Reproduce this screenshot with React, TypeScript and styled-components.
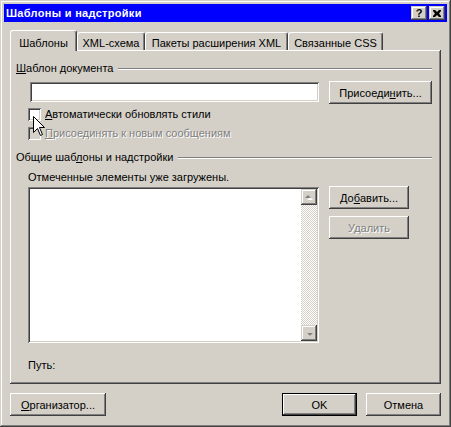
import React from "react";
import styled, { createGlobalStyle, css } from "styled-components";

const FACE = "#D4D0C8";
const SHADOW = "#808080";
const DARK = "#404040";

const GlobalStyle = createGlobalStyle`
  html, body { margin: 0; padding: 0; background: ${FACE}; }
  body {
    font-family: "Liberation Sans", Arial, sans-serif;
    font-size: 11px;
    color: #000;
  }
  * { box-sizing: border-box; }
`;

const raised = css`
  box-shadow: inset -1px -1px ${DARK}, inset 1px 1px #fff, inset -2px -2px ${SHADOW}, inset 2px 2px ${FACE};
`;

const frame = css`
  box-shadow: inset -1px -1px ${DARK}, inset 1px 1px ${FACE}, inset -2px -2px ${SHADOW}, inset 2px 2px #fff;
`;

const sunken = css`
  box-shadow: inset 1px 1px ${SHADOW}, inset -1px -1px #fff, inset 2px 2px ${DARK}, inset -2px -2px ${FACE};
`;

const Window = styled.div`
  position: relative;
  width: 451px;
  height: 427px;
  padding: 4px;
  background: ${FACE};
  display: flex;
  flex-direction: column;
  ${frame}
`;

const TitleBar = styled.div`
  height: 18px;
  background: #0000ff;
  display: flex;
  align-items: center;
  padding: 0 2px;
`;

const Title = styled.div`
  flex: 1;
  color: #fff;
  font-weight: bold;
  font-size: 11px;
  line-height: 14px;
  letter-spacing: 0.3px;
`;

const CaptionButton = styled.div<{ $gap?: number }>`
  width: 16px;
  height: 14px;
  margin-left: ${(p) => p.$gap ?? 0}px;
  background: ${FACE};
  display: flex;
  align-items: center;
  justify-content: center;
  font-weight: bold;
  font-size: 11px;
  line-height: 11px;
  ${frame}
`;

const Body = styled.div`
  flex: 1;
  display: flex;
  flex-direction: column;
  padding: 8px 6px 0;
`;

const TabRow = styled.div`
  height: 20px;
  display: flex;
  align-items: flex-end;
  position: relative;
  z-index: 2;
`;

const Tab = styled.div<{ $w: number; $active?: boolean }>`
  width: ${(p) => p.$w}px;
  height: ${(p) => (p.$active ? 21 : 18)}px;
  margin-bottom: ${(p) => (p.$active ? -1 : 0)}px;
  padding-top: ${(p) => (p.$active ? 5 : 3)}px;
  line-height: 14px;
  text-align: center;
  background: ${FACE};
  border-top: 1px solid #fff;
  border-left: 1px solid #fff;
  border-right: 1px solid ${DARK};
  border-radius: 3px 3px 0 0;
  box-shadow: inset -1px 0 ${SHADOW};
  white-space: nowrap;
`;

const Panel = styled.div`
  position: relative;
  z-index: 1;
  height: 334px;
  display: flex;
  flex-direction: column;
  padding-top: 11px;
  box-shadow: inset -1px -1px ${DARK}, inset 1px 1px #fff, inset -2px -2px ${SHADOW};
`;

const GroupHeader = styled.div<{ $mt?: number }>`
  height: 14px;
  margin: ${(p) => p.$mt ?? 0}px 9px 0 6px;
  display: flex;
  align-items: center;
  line-height: 14px;
  white-space: nowrap;
`;

const GroupLine = styled.div`
  flex: 1;
  margin-left: 5px;
  margin-top: 2px;
  border-top: 1px solid ${SHADOW};
  border-bottom: 1px solid #fff;
`;

const Row = styled.div<{ $mt: number }>`
  display: flex;
  align-items: flex-start;
  margin: ${(p) => p.$mt}px 0 0 18px;
`;

const TextField = styled.div`
  width: 289px;
  height: 20px;
  margin: 1px 10px 0 2px;
  background: #fff;
  ${sunken}
`;

const Button = styled.div<{ $w: number; $disabled?: boolean; $default?: boolean }>`
  width: ${(p) => p.$w}px;
  height: 23px;
  display: flex;
  align-items: center;
  justify-content: center;
  line-height: 14px;
  background: ${FACE};
  white-space: nowrap;
  ${(p) =>
    p.$default
      ? css`
          box-shadow: inset 0 0 0 1px #000, inset -2px -2px ${DARK}, inset 2px 2px #fff, inset -3px -3px ${SHADOW};
        `
      : raised}
  ${(p) =>
    p.$disabled &&
    css`
      color: ${SHADOW};
      text-shadow: 1px 1px 0 #fff;
    `}
`;

const CheckRow = styled.div<{ $mt: number; $disabled?: boolean }>`
  height: 13px;
  display: flex;
  align-items: center;
  margin: ${(p) => p.$mt}px 0 0 18px;
  line-height: 13px;
  white-space: nowrap;
  ${(p) =>
    p.$disabled &&
    css`
      color: ${SHADOW};
      text-shadow: 1px 1px 0 #fff;
    `}
`;

const CheckBox = styled.div<{ $disabled?: boolean }>`
  width: 13px;
  height: 13px;
  margin-right: 4px;
  background: ${(p) => (p.$disabled ? FACE : "#fff")};
  ${sunken}
`;

const Caption = styled.div<{ $mt: number }>`
  margin: ${(p) => p.$mt}px 0 0 18px;
  line-height: 14px;
  height: 14px;
  white-space: nowrap;
`;

const ListBox = styled.div`
  width: 291px;
  height: 156px;
  margin: 1px 10px 0 0;
  padding: 2px;
  display: flex;
  justify-content: flex-end;
  background: #fff;
  ${sunken}
`;

const ScrollBar = styled.div`
  width: 16px;
  display: flex;
  flex-direction: column;
`;

const ScrollButton = styled.div`
  width: 16px;
  height: 16px;
  display: flex;
  align-items: center;
  justify-content: center;
  background: ${FACE};
  ${frame}
`;

const ScrollTrack = styled.div`
  flex: 1;
  background-image: conic-gradient(#fff 25%, ${FACE} 0 50%, #fff 0 75%, ${FACE} 0);
  background-size: 2px 2px;
`;

const ButtonColumn = styled.div`
  display: flex;
  flex-direction: column;
  gap: 7px;
`;

const Footer = styled.div`
  display: flex;
  align-items: center;
  margin-top: 9px;
`;

const Spacer = styled.div`
  flex: 1;
`;

const FooterGap = styled.div`
  width: 9px;
`;

const Cursor = styled.svg`
  position: absolute;
  left: 33px;
  top: 116px;
  z-index: 10;
`;

const Arrow: React.FC<{ down?: boolean }> = ({ down }) => (
  <svg width="8" height="5" viewBox="0 0 8 5" style={{ transform: down ? "rotate(180deg)" : undefined }}>
    <path d="M4 1 L7 4 L1 4 Z" fill="#fff" transform={down ? "translate(-1,-1)" : "translate(1,1)"} />
    <path d="M3 0 L6 3 L0 3 Z" fill={SHADOW} />
  </svg>
);

export default function App() {
  return (
    <>
      <GlobalStyle />
      <Window>
        <TitleBar>
          <Title>Шаблоны и надстройки</Title>
          <CaptionButton>?</CaptionButton>
          <CaptionButton $gap={2}>
            <svg width="8" height="7" viewBox="0 0 8 7">
              <path d="M0 0h2l2 2 2-2h2v1L6 3.5 8 6v1H6L4 5 2 7H0V6l2-2.5L0 1z" fill="#000" />
            </svg>
          </CaptionButton>
        </TitleBar>
        <Body>
          <TabRow>
            <Tab $w={67} $active>Шаблоны</Tab>
            <Tab $w={68}>XML-схема</Tab>
            <Tab $w={143}>Пакеты расширения XML</Tab>
            <Tab $w={95}>Связанные CSS</Tab>
          </TabRow>
          <Panel>
            <GroupHeader>
              <span><u>Ш</u>аблон документа</span>
              <GroupLine />
            </GroupHeader>
            <Row $mt={6}>
              <TextField />
              <Button $w={103}>Присоеди<u>н</u>ить...</Button>
            </Row>
            <CheckRow $mt={4}>
              <CheckBox />
              <span><u>А</u>втоматически обновлять стили</span>
            </CheckRow>
            <CheckRow $mt={6} $disabled>
              <CheckBox $disabled />
              <span><u>П</u>рисоединять к новым сообщениям</span>
            </CheckRow>
            <GroupHeader $mt={10}>
              <span>Общие шаб<u>л</u>оны и надстройки</span>
              <GroupLine />
            </GroupHeader>
            <Caption $mt={6}>Отмеченные элементы уже загружены.</Caption>
            <Row $mt={2}>
              <ListBox>
                <ScrollBar>
                  <ScrollButton><Arrow /></ScrollButton>
                  <ScrollTrack />
                  <ScrollButton><Arrow down /></ScrollButton>
                </ScrollBar>
              </ListBox>
              <ButtonColumn>
                <Button $w={80}>До<u>б</u>авить...</Button>
                <Button $w={80} $disabled>Удалить</Button>
              </ButtonColumn>
            </Row>
            <Caption $mt={15}>Путь:</Caption>
          </Panel>
          <Footer>
            <Button $w={96}><u>О</u>рганизатор...</Button>
            <Spacer />
            <Button $w={75} $default>OK</Button>
            <FooterGap />
            <Button $w={75}>Отмена</Button>
          </Footer>
        </Body>
        <Cursor width="13" height="21" viewBox="0 0 13 21">
          <path d="M0.5 0.5 L0.5 16.5 L4.5 12.5 L7.5 19.5 L9.5 18.5 L6.5 11.5 L11.5 11.5 Z" fill="#fff" stroke="#000" strokeWidth="1" />
        </Cursor>
      </Window>
    </>
  );
}
